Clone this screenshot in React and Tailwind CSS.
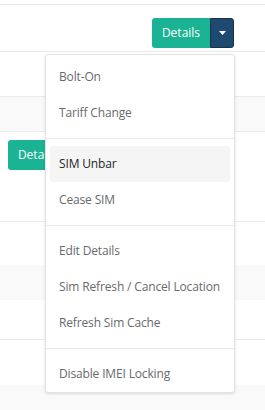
import React from 'react';

const groups = [
    ['Bolt-On', 'Tariff Change'],
    ['SIM Unbar', 'Cease SIM'],
    ['Edit Details', 'Sim Refresh / Cancel Location', 'Refresh Sim Cache'],
    ['Disable IMEI Locking'],
];

function DetailsButton({ split }) {
    return (
        <div className="inline-flex h-[30px]">
            <div
                className={
                    'flex w-[58px] items-center justify-center bg-[#1ab394] text-[12px] text-white ' +
                    (split ? 'rounded-l-[3px]' : 'rounded-[3px]')
                }
            >
                Details
            </div>
            {split && (
                <div className="flex w-[24px] items-center justify-center rounded-r-[3px] border border-[#17324d] bg-[#1f4a70]">
                    <svg width="7" height="4" viewBox="0 0 7 4">
                        <path d="M0 0h7L3.5 4z" fill="#fff" />
                    </svg>
                </div>
            )}
        </div>
    );
}

export default function App() {
    return (
        <div className="relative h-[410px] w-full overflow-hidden bg-white font-['Open_Sans',sans-serif]">
            <div className="h-[5px] border-b border-[#e7eaec]" />
            <div className="flex h-[47px] justify-end border-b border-[#e7eaec] pr-[31px] pt-[13px]">
                <DetailsButton split />
            </div>
            <div className="h-[45px] border-b border-[#e7eaec]" />
            <div className="h-[35px] border-b border-[#e7eaec] bg-[#f9f9f9]" />
            <div className="h-[90px] border-b border-[#e7eaec] pl-[8px] pt-[8px]">
                <DetailsButton />
            </div>
            <div className="h-[43px]" />
            <div className="h-[35px] bg-[#f9f9f9]" />
            <div className="h-[40px] border-b border-[#e7eaec]" />
            <div className="h-[45px]" />
            <div className="h-[30px] bg-[#f9f9f9]" />

            <div className="absolute left-[45px] top-[54px] w-[190px] rounded-[3px] border border-[#e1e3e6] bg-white pt-[4px] shadow-[0_1px_3px_rgba(0,0,0,0.12)]">
                {groups.map((items, gi) => (
                    <div key={gi}>
                        {gi > 0 && <div className="my-[7px] h-px bg-[#e7eaec]" />}
                        {items.map((label) => (
                            <div
                                key={label}
                                className={
                                    'mx-[4px] flex h-[36px] items-center whitespace-nowrap rounded-[3px] px-[9px] text-[12px] tracking-[-0.15px] ' +
                                    (label === 'SIM Unbar'
                                        ? 'bg-[#f5f5f5] text-[#262626]'
                                        : 'text-[#676a6c]')
                                }
                            >
                                {label}
                            </div>
                        ))}
                    </div>
                ))}
            </div>
        </div>
    );
}
